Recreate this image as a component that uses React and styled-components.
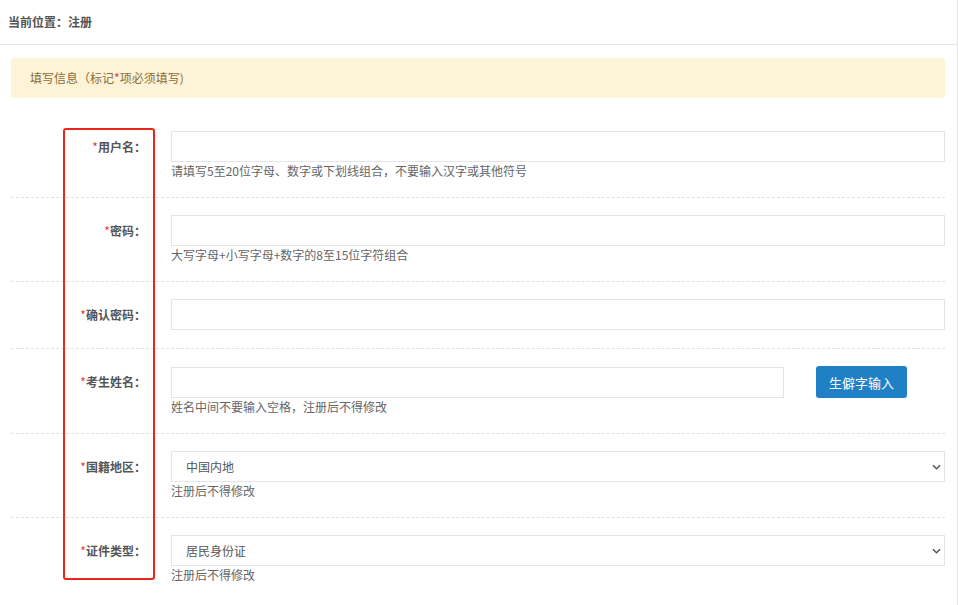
import React from 'react'
import styled, { createGlobalStyle } from 'styled-components'

const GlobalStyle = createGlobalStyle`
  html, body {
    margin: 0;
    padding: 0;
    background: #fff;
  }
  body {
    font-family: 'Noto Sans CJK SC', 'Noto Sans', sans-serif;
    font-size: 12px;
    color: #555;
  }
`

const rows = [
  { label: '用户名', help: '请填写5至20位字母、数字或下划线组合，不要输入汉字或其他符号' },
  { label: '密码', help: '大写字母+小写字母+数字的8至15位字符组合', type: 'password' },
  { label: '确认密码', type: 'password' },
  { label: '考生姓名', help: '姓名中间不要输入空格，注册后不得修改', button: '生僻字输入' },
  { label: '国籍地区', help: '注册后不得修改', options: ['中国内地', '香港', '澳门', '台湾', '外国'] },
  { label: '证件类型', help: '注册后不得修改', options: ['居民身份证', '护照', '港澳居民来往内地通行证'] },
]

export default function App() {
  return (
    <Page>
      <GlobalStyle />
      <Crumb>当前位置：注册</Crumb>
      <Notice>
        填写信息（标记<Star>*</Star>项必须填写)
      </Notice>
      <Form>
        {rows.map((r, i) => (
          <Row key={r.label} $last={i === rows.length - 1}>
            <Label>
              <Star>*</Star>{r.label}：
            </Label>
            <Field>
              {r.options ? (
                <SelectWrap>
                  <Select defaultValue={r.options[0]}>
                    {r.options.map(o => <option key={o}>{o}</option>)}
                  </Select>
                  <Chevron viewBox="0 0 10 6">
                    <path d="M1 1l4 4 4-4" fill="none" stroke="#555" strokeWidth="1.6" />
                  </Chevron>
                </SelectWrap>
              ) : r.button ? (
                <InputLine>
                  <Input $narrow />
                  <Button type="button">{r.button}</Button>
                </InputLine>
              ) : (
                <Input type={r.type || 'text'} />
              )}
              {r.help && <Help>{r.help}</Help>}
            </Field>
          </Row>
        ))}
        <Frame />
      </Form>
    </Page>
  )
}

const Page = styled.div`
  width: 958px;
  min-height: 605px;
  box-sizing: border-box;
  border-right: 1px solid #e3e3e3;
`

const Crumb = styled.div`
  height: 44px;
  line-height: 44px;
  padding-left: 8px;
  font-size: 12px;
  font-weight: bold;
  color: #555;
  border-bottom: 1px solid #e6e6e6;
`

const Notice = styled.div`
  margin: 13px 12px 0 11px;
  height: 40px;
  line-height: 40px;
  padding-left: 19px;
  background: #fdf3d6;
  border-radius: 3px;
  color: #8a6d3b;
  font-size: 12px;
`

const Star = styled.span`
  color: #e4393c;
  font-weight: normal;
`

const Form = styled.div`
  position: relative;
  margin: 0 12px 0 11px;
  padding-top: 16px;
`

const Row = styled.div`
  display: flex;
  align-items: flex-start;
  padding: 17px 0 18px;
  border-bottom: ${p => (p.$last ? 'none' : '1px dashed #e0e0e0')};
`

const Label = styled.div`
  width: 160px;
  flex-shrink: 0;
  box-sizing: border-box;
  padding-right: 25px;
  text-align: right;
  line-height: 31px;
  font-size: 12px;
  font-weight: bold;
  color: #555;
`

const Field = styled.div`
  flex: 1;
  display: flex;
  flex-direction: column;
`

const InputLine = styled.div`
  display: flex;
  align-items: center;
`

const Input = styled.input`
  box-sizing: border-box;
  height: 31px;
  width: ${p => (p.$narrow ? '613px' : '100%')};
  margin: 0;
  border: 1px solid #e5e5e5;
  border-radius: 0;
  padding: 0 12px;
  outline: none;
  font-family: inherit;
  font-size: 12px;
`

const Button = styled.button`
  margin-left: 32px;
  width: 91px;
  height: 32px;
  border: none;
  border-radius: 3px;
  background: #1f80c6;
  color: #fff;
  font-family: inherit;
  font-size: 13px;
  cursor: pointer;
`

const SelectWrap = styled.div`
  position: relative;
`

const Select = styled.select`
  appearance: none;
  box-sizing: border-box;
  width: 100%;
  height: 31px;
  margin: 0;
  padding: 0 14px;
  border: 1px solid #e5e5e5;
  border-radius: 0;
  background: #fff;
  color: #555;
  font-family: inherit;
  font-size: 12px;
  outline: none;
`

const Chevron = styled.svg`
  position: absolute;
  right: 4px;
  top: 13px;
  width: 9px;
  height: 6px;
  pointer-events: none;
`

const Help = styled.div`
  line-height: 17px;
  font-size: 12px;
  color: #666;
`

const Frame = styled.div`
  position: absolute;
  left: 52px;
  top: 30px;
  width: 92px;
  height: 452px;
  box-sizing: border-box;
  border: 2px solid #e8261d;
  border-radius: 3px;
  pointer-events: none;
`
